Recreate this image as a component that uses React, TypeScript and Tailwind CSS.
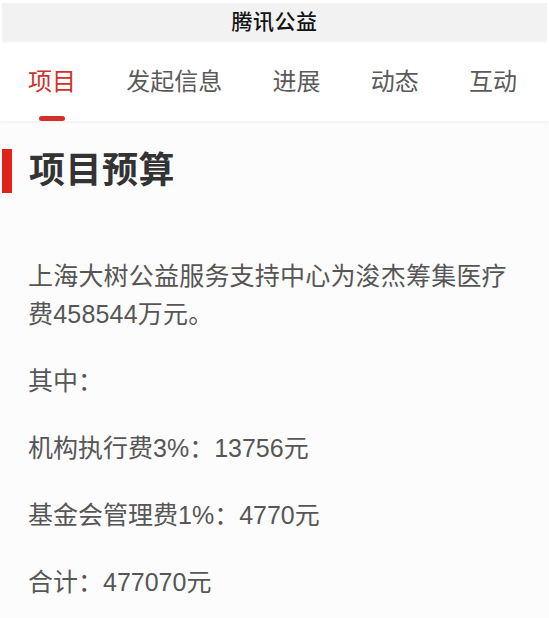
const tabs = ['项目', '发起信息', '进展', '动态', '互动']

const lines = ['其中：', '机构执行费3%：13756元', '基金会管理费1%：4770元', '合计：477070元']

export default function App() {
  return (
    <div
      className="w-[549px] h-[618px] overflow-hidden bg-[#fdfcfd]"
      style={{ fontFamily: '"Liberation Sans", "Noto Sans CJK SC", sans-serif' }}
    >
      {/* top bar */}
      <div className="bg-white pt-[3px] px-[2px]">
        <div className="h-[40px] bg-[#f2f2f2] border-b-2 border-[#f8f8f8] flex items-center justify-center">
          <span className="text-[21px] font-medium text-[#141414] tracking-[0.5px]">腾讯公益</span>
        </div>
      </div>

      {/* tabs */}
      <div className="h-[78px] bg-white shadow-[0_2px_3px_rgba(0,0,0,0.04)] flex items-start pl-[28px] pr-[32px] pt-[24px] justify-between">
        {tabs.map((t, i) => (
          <div key={t} className="flex flex-col items-center">
            <span
              className={`text-[24px] leading-[30px] ${i === 0 ? 'text-[#d2302c]' : 'text-[#5a5a5a]'}`}
            >
              {t}
            </span>
            {i === 0 && <div className="mt-[19px] w-[26px] h-[5px] rounded-full bg-[#d2302c]" />}
          </div>
        ))}
      </div>

      {/* heading */}
      <div className="mt-[28px] flex items-center h-[44px] pl-[2px]">
        <div className="w-[10px] h-[44px] bg-[#e0231a]" />
        <h1 className="ml-[17px] text-[36px] font-bold text-[#333] leading-none tracking-[0.5px]">项目预算</h1>
      </div>

      {/* body */}
      <div className="px-[28px] pt-[64px] text-[25px] text-[#565656] leading-[38px]">
        <p className="tracking-[0.2px]">上海大树公益服务支持中心为浚杰筹集医疗费458544万元。</p>
        {lines.map((l) => (
          <p key={l} className="mt-[29px]">
            {l}
          </p>
        ))}
      </div>
    </div>
  )
}
